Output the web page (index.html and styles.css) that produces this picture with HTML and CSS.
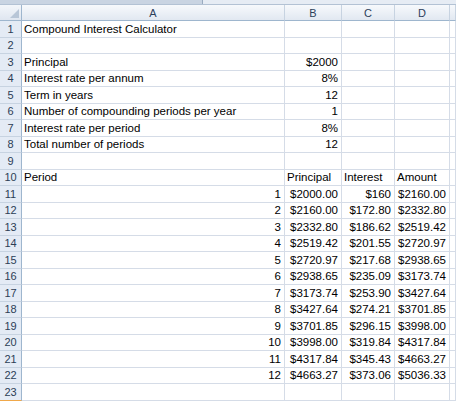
FILE: index.html
```html
<!DOCTYPE html>
<html>
<head>
<meta charset="utf-8">
<link rel="stylesheet" href="styles.css">
</head>
<body>
<div class="sheet">
  <div class="strip"><div class="strip-left"></div><div class="strip-right"></div></div>
  <div class="row hdr">
    <div class="corner"><span class="tri"></span></div>
    <div class="ch">A</div><div class="ch">B</div><div class="ch">C</div><div class="ch">D</div><div class="ch"></div>
  </div>
  <div class="row"><div class="rh">1</div><div class="c">Compound Interest Calculator</div><div class="c"></div><div class="c"></div><div class="c"></div><div class="c"></div></div>
  <div class="row"><div class="rh">2</div><div class="c"></div><div class="c"></div><div class="c"></div><div class="c"></div><div class="c"></div></div>
  <div class="row"><div class="rh">3</div><div class="c">Principal</div><div class="c r">$2000</div><div class="c"></div><div class="c"></div><div class="c"></div></div>
  <div class="row"><div class="rh">4</div><div class="c">Interest rate per annum</div><div class="c r">8%</div><div class="c"></div><div class="c"></div><div class="c"></div></div>
  <div class="row"><div class="rh">5</div><div class="c">Term in years</div><div class="c r">12</div><div class="c"></div><div class="c"></div><div class="c"></div></div>
  <div class="row"><div class="rh">6</div><div class="c">Number of compounding periods per year</div><div class="c r">1</div><div class="c"></div><div class="c"></div><div class="c"></div></div>
  <div class="row"><div class="rh">7</div><div class="c">Interest rate per period</div><div class="c r">8%</div><div class="c"></div><div class="c"></div><div class="c"></div></div>
  <div class="row"><div class="rh">8</div><div class="c">Total number of periods</div><div class="c r">12</div><div class="c"></div><div class="c"></div><div class="c"></div></div>
  <div class="row"><div class="rh">9</div><div class="c"></div><div class="c"></div><div class="c"></div><div class="c"></div><div class="c"></div></div>
  <div class="row"><div class="rh">10</div><div class="c">Period</div><div class="c">Principal</div><div class="c">Interest</div><div class="c">Amount</div><div class="c"></div></div>
  <div class="row"><div class="rh">11</div><div class="c r">1</div><div class="c r">$2000.00</div><div class="c r">$160</div><div class="c r">$2160.00</div><div class="c"></div></div>
  <div class="row"><div class="rh">12</div><div class="c r">2</div><div class="c r">$2160.00</div><div class="c r">$172.80</div><div class="c r">$2332.80</div><div class="c"></div></div>
  <div class="row"><div class="rh">13</div><div class="c r">3</div><div class="c r">$2332.80</div><div class="c r">$186.62</div><div class="c r">$2519.42</div><div class="c"></div></div>
  <div class="row"><div class="rh">14</div><div class="c r">4</div><div class="c r">$2519.42</div><div class="c r">$201.55</div><div class="c r">$2720.97</div><div class="c"></div></div>
  <div class="row"><div class="rh">15</div><div class="c r">5</div><div class="c r">$2720.97</div><div class="c r">$217.68</div><div class="c r">$2938.65</div><div class="c"></div></div>
  <div class="row"><div class="rh">16</div><div class="c r">6</div><div class="c r">$2938.65</div><div class="c r">$235.09</div><div class="c r">$3173.74</div><div class="c"></div></div>
  <div class="row"><div class="rh">17</div><div class="c r">7</div><div class="c r">$3173.74</div><div class="c r">$253.90</div><div class="c r">$3427.64</div><div class="c"></div></div>
  <div class="row"><div class="rh">18</div><div class="c r">8</div><div class="c r">$3427.64</div><div class="c r">$274.21</div><div class="c r">$3701.85</div><div class="c"></div></div>
  <div class="row"><div class="rh">19</div><div class="c r">9</div><div class="c r">$3701.85</div><div class="c r">$296.15</div><div class="c r">$3998.00</div><div class="c"></div></div>
  <div class="row"><div class="rh">20</div><div class="c r">10</div><div class="c r">$3998.00</div><div class="c r">$319.84</div><div class="c r">$4317.84</div><div class="c"></div></div>
  <div class="row"><div class="rh">21</div><div class="c r">11</div><div class="c r">$4317.84</div><div class="c r">$345.43</div><div class="c r">$4663.27</div><div class="c"></div></div>
  <div class="row"><div class="rh">22</div><div class="c r">12</div><div class="c r">$4663.27</div><div class="c r">$373.06</div><div class="c r">$5036.33</div><div class="c"></div></div>
  <div class="row"><div class="rh last">23</div><div class="c"></div><div class="c"></div><div class="c"></div><div class="c"></div><div class="c"></div></div>
</div>
</body>
</html>
```
FILE: styles.css
```css
* { box-sizing: border-box; }
body {
  margin: 0;
  background: #fff;
  font-family: "Liberation Sans", Arial, sans-serif;
  font-size: 11.5px;
  color: #000;
}
.sheet {
  width: 456px;
  height: 401px;
  overflow: hidden;
}
.strip {
  height: 5px;
  display: flex;
  border-bottom: 1px solid #b3c2d4;
}
.strip-left {
  width: 203px;
  background: #c9d4e2;
  border-right: 1px solid #9aabc0;
}
.strip-right {
  flex: 1;
  background: #e6ecf4;
}
.row {
  display: grid;
  grid-template-columns: 22px 263px 57px 53px 55px 6px;
  height: 16.5px;
}
.row.hdr {
  height: 16px;
}
.corner {
  position: relative;
  background: linear-gradient(#f3f6fa, #dfe6f0);
  border-right: 1px solid #9eb6ce;
  border-bottom: 1px solid #9eb6ce;
}
.tri {
  position: absolute;
  right: 2px;
  bottom: 2px;
  width: 0;
  height: 0;
  border-left: 9px solid transparent;
  border-bottom: 9px solid #b8c6d7;
}
.ch {
  background: linear-gradient(#f7f9fc, #e1e8f1);
  border-right: 1px solid #c7d3e1;
  border-bottom: 1px solid #9eb6ce;
  color: #2c405a;
  font-size: 11px;
  display: flex;
  align-items: center;
  justify-content: center;
}
.rh {
  background: #e4ebf5;
  border-right: 1px solid #9eb6ce;
  border-bottom: 1px solid #c7d3e1;
  color: #2c3e55;
  font-size: 11px;
  display: flex;
  align-items: center;
  justify-content: center;
}
.rh.last {
  border-bottom: 1px solid #f0a84a;
}
.c {
  border-right: 1px solid #d5dce7;
  border-bottom: 1px solid #d5dce7;
  padding: 0 2px;
  display: flex;
  align-items: center;
  white-space: nowrap;
  overflow: visible;
}
.c.r {
  justify-content: flex-end;
  padding-right: 3px;
}
```
